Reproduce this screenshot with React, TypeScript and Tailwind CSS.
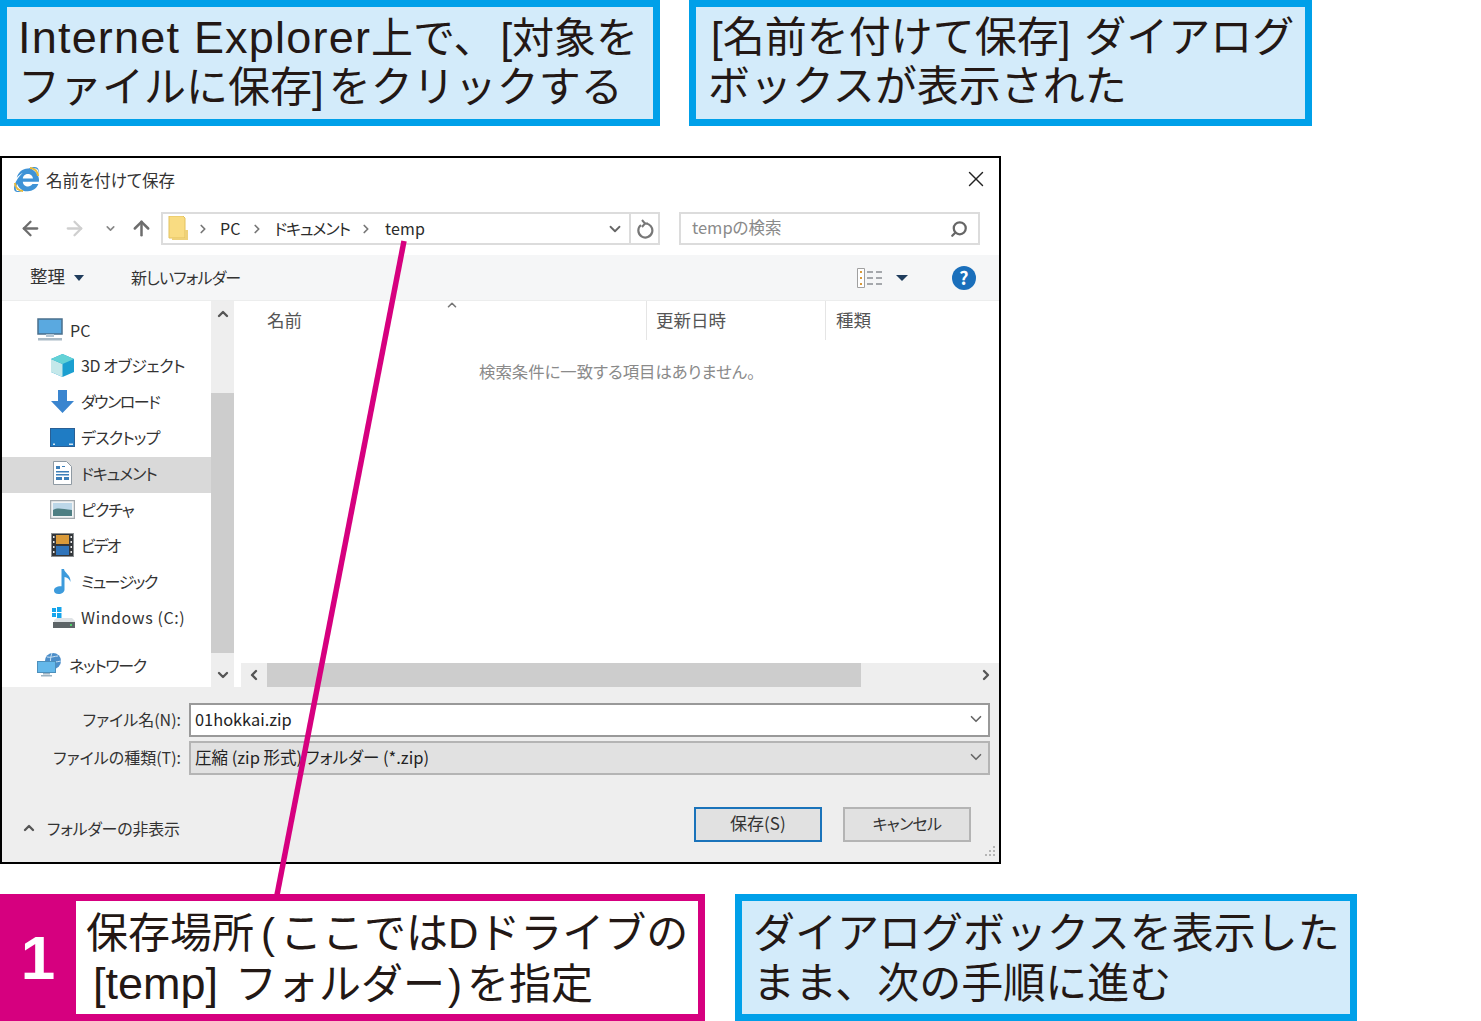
import { ChevronDown, ChevronUp, ChevronLeft, ChevronRight, ArrowLeft, ArrowRight, ArrowUp, Search, X } from "lucide-react"
import { FaInternetExplorer } from "react-icons/fa"
import type { ReactNode } from "react"

function Callout({ className, children }: { className: string; children: ReactNode }) {
  return (
    <div className={`h-full border-[7px] border-[#00a0e9] bg-[#d3ebfa] font-[family-name:'Liberation_Sans','Noto_Sans_CJK_JP',sans-serif] text-[42px] text-[#231815] whitespace-nowrap ${className}`}>
      {children}
    </div>
  )
}

function PcIcon() {
  return (
    <svg width="26" height="24" viewBox="0 0 26 24">
      <rect x="1" y="1" width="24" height="15" fill="#5aa9e0" stroke="#4a6f8c" strokeWidth="1.5" />
      <rect x="9" y="16" width="8" height="3" fill="#b4c6d3" />
      <rect x="1" y="20" width="24" height="2.5" fill="#a9bac6" />
    </svg>
  )
}

function CubeIcon() {
  return (
    <svg width="25" height="25" viewBox="0 0 25 25">
      <path d="M12.5 1 24 6v13l-11.500 5L1 19V6z" fill="#1b9fd0" />
      <path d="M1 6l11.500 5v13L1 19z" fill="#c4e8ea" />
      <path d="M12.500 1 24 6l-11.500 5L1 6z" fill="#63d2d6" />
    </svg>
  )
}

function DownloadIcon() {
  return (
    <svg width="25" height="25" viewBox="0 0 25 25">
      <path d="M8 1h9v11h7L12.500 24 1 12h7z" fill="#3a85cf" />
    </svg>
  )
}

function DesktopIcon() {
  return (
    <svg width="25" height="19" viewBox="0 0 25 19">
      <rect x="0.500" y="0.500" width="24" height="18" fill="#1f7cc4" stroke="#2a5f94" />
      <rect x="3" y="15.500" width="2" height="1.500" fill="#d6e6f2" />
      <rect x="19" y="15.500" width="4" height="1.500" fill="#d6e6f2" />
    </svg>
  )
}

function DocIcon() {
  return (
    <svg width="19" height="24" viewBox="0 0 19 24">
      <path d="M.500.500h13l5 5v18H.500z" fill="#fff" stroke="#8f9aa3" />
      <path d="M3 5h4v3H3zM9 5h3v1H9zM3 10h13v1.500H3zM3 13h13v1.500H3zM3 16h6v3H3zM11 16h5v3h-5z" fill="#3d7fb8" />
    </svg>
  )
}

function PictureIcon() {
  return (
    <svg width="25" height="19" viewBox="0 0 25 19">
      <rect x="0.500" y="0.500" width="24" height="18" fill="#f2f4f5" stroke="#a3a9ad" strokeWidth="1.500" />
      <rect x="3" y="3" width="19" height="13" fill="#bcd7e8" />
      <path d="M3 10c5-3 9-1 19 0v6H3z" fill="#4e7f83" />
    </svg>
  )
}

function VideoIcon() {
  return (
    <svg width="23" height="24" viewBox="0 0 23 24">
      <rect x="0.500" y="0.500" width="22" height="23" fill="#33363a" stroke="#8b8f92" />
      <rect x="5" y="2" width="13" height="9" fill="#d99a3a" />
      <rect x="5" y="13" width="13" height="9" fill="#2f74bb" />
      <path d="M2 3h1.500v2H2zM2 8h1.500v2H2zM2 13h1.500v2H2zM2 18h1.500v2H2zM19.500 3H21v2h-1.500zM19.500 8H21v2h-1.500zM19.500 13H21v2h-1.500zM19.500 18H21v2h-1.500z" fill="#e8e8e8" />
    </svg>
  )
}

function MusicIcon() {
  return (
    <svg width="19" height="25" viewBox="0 0 19 25">
      <path d="M8.500 0h2.500c.5 4 7 6 6.500 13-1-3-3.500-4.500-6-5v12.500c0 2.500-2.500 4.500-6 4.500C2.500 25 1 23.500 1 21.500 1 19 4 17 8.500 17.300z" fill="#3d9bdc" />
    </svg>
  )
}

function DriveIcon() {
  return (
    <svg width="24" height="21" viewBox="0 0 24 21">
      <path d="M1 1h4v4H1zM6 0h4.500v5H6zM1 6h4v4H1zM6 6h4.500v5H6z" fill="#16a5ec" />
      <path d="M3 13 6 11h15l3 3v2H3z" fill="#dfe3e6" />
      <rect x="2" y="15" width="22" height="6" fill="#5d6467" />
      <rect x="19" y="17" width="2" height="2" fill="#4fd06a" />
    </svg>
  )
}

function NetworkIcon() {
  return (
    <svg width="25" height="24" viewBox="0 0 25 24">
      <circle cx="16" cy="8" r="8" fill="#4c8ec9" />
      <path d="M10 4c4 1 8-1 11-1M9 9c5 1 10 0 15-1M15 0c-2 5-2 11 0 16" stroke="#c9e2f4" fill="none" />
      <rect x="0.500" y="8.500" width="18" height="11" fill="#64b8ea" stroke="#4d8fbb" />
      <rect x="6" y="20" width="7" height="1.500" fill="#9bb2c2" />
      <rect x="4" y="22" width="11" height="1.500" fill="#9bb2c2" />
    </svg>
  )
}

const treeItems = [
  { label: "3D オブジェクト", icon: <CubeIcon />, text: "tracking-[-0.4px]" },
  { label: "ダウンロード", icon: <DownloadIcon />, text: "tracking-[-1.5px]" },
  { label: "デスクトップ", icon: <DesktopIcon />, text: "tracking-[-0.8px]" },
  { label: "ドキュメント", icon: <DocIcon />, text: "tracking-[-1px]", active: true },
  { label: "ピクチャ", icon: <PictureIcon />, text: "tracking-[-1px]" },
  { label: "ビデオ", icon: <VideoIcon />, text: "tracking-[-2px]" },
  { label: "ミュージック", icon: <MusicIcon />, text: "tracking-[-1.5px]" },
  { label: "Windows (C:)", icon: <DriveIcon />, text: "tracking-[0.6px]" },
]

function SaveDialog() {
  return (
    <div className="mt-[30px] flex h-[708px] w-[1001px] flex-col border-2 border-black bg-white font-[family-name:'Noto_Sans_CJK_JP','Noto_Sans',sans-serif] text-[16px] text-[#333] [font-feature-settings:'palt']">
      {/* title bar */}
      <div className="flex h-[49px] items-center pb-[6px] pl-3 pr-[10px]">
        <span className="relative flex h-[25px] w-[25px] items-center justify-center">
          <FaInternetExplorer size={25} className="text-[#3f93d6]" />
          <span className="absolute right-0 top-0 h-[9px] w-[9px] rounded-tr-full border-r-2 border-t-2 border-[#e8b93a]" />
          <span className="absolute bottom-0 left-0 h-[9px] w-[9px] rounded-bl-full border-b-2 border-l-2 border-[#e8b93a]" />
        </span>
        <span className="ml-[7px] mt-[2px] text-[16.5px]">名前を付けて保存</span>
        <X size={26} strokeWidth={1.3} className="mb-[2px] ml-auto text-[#222]" />
      </div>

      {/* nav row */}
      <div className="flex h-[48px] items-start pt-[5px]">
        <div className="flex w-[159px] items-center pl-[17px] pt-[5px]">
          <ArrowLeft size={23} className="text-[#6d6d6d]" strokeWidth={2.4} />
          <ArrowRight size={23} className="ml-[21px] text-[#cfcfcf]" strokeWidth={2.4} />
          <ChevronDown size={13} className="ml-[18px] text-[#888]" strokeWidth={3} />
          <ArrowUp size={23} className="ml-[13px] text-[#6d6d6d]" strokeWidth={2.6} />
        </div>
        <div className="flex h-[33px] w-[499px] items-center border-2 border-[#dcdcdc] pb-[2px] text-[#2b2b2b]">
          <svg width="22" height="26" viewBox="0 0 22 26" className="ml-[5px] mt-[2px]">
            <path d="M1 0h14l2 2v20H1z" fill="#f9dc82" stroke="#e3c25e" />
            <path d="M17 14h3v10H4v-2h13z" fill="#eed17a" />
          </svg>
          <ChevronRight size={14} className="ml-[6px] mt-[2px] text-[#777]" strokeWidth={3} />
          <span className="ml-[10px]">PC</span>
          <ChevronRight size={14} className="ml-[10px] mt-[2px] text-[#777]" strokeWidth={3} />
          <span className="ml-[10px] tracking-[-1px]">ドキュメント</span>
          <ChevronRight size={14} className="ml-[9px] mt-[2px] text-[#777]" strokeWidth={3} />
          <span className="ml-[12px] tracking-[0.2px]">temp</span>
          <ChevronDown size={18} className="ml-auto mr-[5px] mt-[2px] text-[#666]" strokeWidth={2.4} />
          <span className="mb-[-2px] flex h-[29px] w-[29px] items-center justify-center border-l-2 border-[#dcdcdc]">
            <svg width="18" height="20" viewBox="0 0 18 20" fill="none" stroke="#777" strokeWidth="2.2">
              <path d="M5 6a7 7 0 1 0 4-1.500h3" />
              <path d="M6 1l3 3.500L6 8" strokeWidth="2" />
            </svg>
          </span>
        </div>
        <div className="ml-[19px] flex h-[33px] w-[301px] items-center justify-between border-2 border-[#dcdcdc] pb-[2px] pl-[11px] pr-[10px] text-[16.500px] text-[#8a8a8a]">
          <span>tempの検索</span>
          <Search size={18} className="mt-[2px] -scale-x-100 text-[#666]" strokeWidth={3} />
        </div>
      </div>

      {/* toolbar */}
      <div className="flex h-[46px] shrink-0 items-center border-b border-[#eceded] bg-[#f5f6f7] pl-[28px] text-[#333]">
        <span className="mb-[2px] text-[17.500px]">整理</span>
        <span className="ml-[9px] h-0 w-0 border-x-[5px] border-t-[6px] border-x-transparent border-t-[#1f3c5c]" />
        <span className="mb-[2px] ml-[47px] tracking-[-0.8px]">新しいフォルダー</span>
        <svg width="26" height="20" viewBox="0 0 26 20" className="ml-auto">
          <path d="M.500.500h7v19h-7z" fill="#fff" stroke="#a0a0a0" />
          <path d="M3 3h2v2H3zM3 9h2v2H3zM3 15h2v2H3z" fill="#d99a3a" />
          <path d="M10 4h6M19 4h6M10 10h6M19 10h6M10 16h6M19 16h6" stroke="#8a8f94" strokeWidth="1.500" />
        </svg>
        <span className="ml-[13px] h-0 w-0 border-x-[6px] border-t-[6px] border-x-transparent border-t-[#1f3c5c]" />
        <span className="ml-[44px] mr-[23px] flex h-[24px] w-[24px] items-center justify-center rounded-full bg-[#1a6fbb] text-[18px] font-bold text-white">?</span>
      </div>

      {/* main */}
      <div className="flex min-h-0 flex-1">
        <div className="w-[209px] shrink-0 pt-[12px]">
          <div className="flex h-[36px] items-center pb-[2px] pl-[35px]">
            <PcIcon />
            <span className="ml-[7px]">PC</span>
          </div>
          {treeItems.map((item) => (
            <div
              key={item.label}
              className={`flex h-[36px] items-center pb-[4px] ${item.active ? "bg-[#d9d9d9]" : ""}`}
            >
              <span className="ml-[48px] flex w-[25px] justify-center">{item.icon}</span>
              <span className={`ml-[6px] whitespace-nowrap ${item.text}`}>{item.label}</span>
            </div>
          ))}
          <div className="mt-[11px] flex h-[36px] items-center pb-[2px] pl-[35px]">
            <NetworkIcon />
            <span className="ml-[7px] tracking-[-1.3px]">ネットワーク</span>
          </div>
        </div>
        <div className="flex w-[23px] shrink-0 flex-col items-center bg-[#eeeeee] pt-[5px]">
          <ChevronUp size={16} className="text-[#555]" strokeWidth={3.5} />
          <div className="mt-[71px] h-[260px] w-full bg-[#cdcdcd]" />
          <ChevronDown size={16} className="mt-[14px] text-[#555]" strokeWidth={3.5} />
        </div>
        <div className="ml-[7px] flex min-w-0 flex-1 flex-col">
          <div className="flex h-[39px] shrink-0 text-[17.500px] text-[#555]">
            <div className="relative w-[405px] pl-[26px] pt-[6px]">
              名前
              <ChevronUp size={14} className="absolute left-[204px] top-[-3px] text-[#777]" strokeWidth={2.8} />
            </div>
            <div className="w-[179px] border-l border-[#e5e5e5] pl-[9px] pt-[6px]">更新日時</div>
            <div className="flex-1 border-l border-[#e5e5e5] pl-[10px] pt-[6px]">種類</div>
          </div>
          <div className="flex-1 pl-[238px] pt-[19px] text-[16.400px] text-[#8a8a8a]">検索条件に一致する項目はありません。</div>
          <div className="flex h-[24px] shrink-0 items-center justify-between bg-[#eeeeee] px-[5px]">
            <ChevronLeft size={16} className="text-[#555]" strokeWidth={3.5} />
            <div className="ml-[5px] mr-auto h-full w-[594px] bg-[#cdcdcd]" />
            <ChevronRight size={16} className="text-[#555]" strokeWidth={3.5} />
          </div>
        </div>
      </div>

      {/* footer */}
      <div className="relative flex h-[175px] shrink-0 flex-col bg-[#eeeeee]">
        <div className="mt-[16px] flex h-[34px] items-center">
          <span className="w-[179px] pb-[2px] text-right">ファイル名(N):</span>
          <div className="ml-[8px] flex h-full w-[801px] items-center justify-between border-2 border-[#999] bg-white pb-[2px] pl-[4px] pr-[3px] text-[16.400px] text-[#222]">
            <span>01hokkai.zip</span>
            <ChevronDown size={18} className="text-[#666]" strokeWidth={2.2} />
          </div>
        </div>
        <div className="mt-[4px] flex h-[34px] items-center">
          <span className="w-[179px] pb-[2px] text-right">ファイルの種類(T):</span>
          <div className="ml-[8px] flex h-full w-[801px] items-center justify-between border-2 border-[#b4b4b4] bg-[#e1e1e1] pb-[2px] pl-[4px] pr-[3px] text-[16.500px] text-[#222]">
            <span>圧縮 (zip 形式) フォルダー (*.zip)</span>
            <ChevronDown size={18} className="text-[#666]" strokeWidth={2.2} />
          </div>
        </div>
        <div className="mt-[32px] flex h-[35px] items-center">
          <ChevronUp size={16} className="ml-[19px] mt-[7px] text-[#555]" strokeWidth={3.5} />
          <span className="ml-[10px] mt-[6px] tracking-[-0.2px]">フォルダーの非表示</span>
          <button className="ml-[514px] h-[35px] w-[128px] border-2 border-[#1a73ba] bg-[#e1e1e1] pb-[3px] text-[17px]">保存(S)</button>
          <button className="ml-[21px] h-[35px] w-[128px] border-2 border-[#b4b4b4] bg-[#e1e1e1] pb-[3px] tracking-[-0.8px]">キャンセル</button>
        </div>
        <svg width="12" height="12" viewBox="0 0 12 12" className="absolute bottom-[4px] right-[3px]">
          <path d="M9 0h2v2H9zM5 4h2v2H5zM9 4h2v2H9zM1 8h2v2H1zM5 8h2v2H5zM9 8h2v2H9z" fill="#b5b5b5" />
        </svg>
      </div>
    </div>
  )
}

export default function App() {
  return (
    <div className="relative h-[1021px] w-[1481px] overflow-hidden bg-white font-[family-name:'Noto_Sans_CJK_JP',sans-serif]">
      <div className="flex h-[126px] gap-[29px]">
        <Callout className="w-[660px] pl-[11px] pt-[6px] leading-[49px]">
          <span className="text-[45px] tracking-[1.2px]">Internet Explorer</span>上で、<span className="ml-[5px]">[</span>対象を
          <br />
          ファイルに保存<span className="mr-[5px]">]</span>をクリックする
        </Callout>
        <Callout className="w-[623px] pl-[15px] pt-[6px] leading-[49px]">
          [名前を付けて保存<span className="mr-[14px]">]</span>ダイアログ
          <br />
          <span className="-ml-[3px]">ボックスが表示された</span>
        </Callout>
      </div>

      <SaveDialog />

      <div className="mt-[30px] flex h-[127px]">
        <div className="flex h-full w-[705px] bg-[#d6007f]">
          <div className="flex w-[76px] shrink-0 items-center justify-center font-[family-name:'Liberation_Sans',sans-serif] text-[62px] font-bold text-white">1</div>
          <div className="my-[7px] mr-[7px] flex-1 whitespace-nowrap bg-white pl-[10px] pt-[8px] font-[family-name:'Liberation_Sans','Noto_Sans_CJK_JP',sans-serif] text-[42px] leading-[50px] text-[#231815]">
            保存場所<span className="ml-[7px] mr-[5px]">(</span>ここではDドライブの
            <br />
            <span className="ml-[7px] mr-[17px] text-[45px]">[temp]</span>フォルダー<span className="ml-[3px] mr-[5px]">)</span>を指定
          </div>
        </div>
        <Callout className="ml-[30px] w-[622px] pl-[11px] pt-[8px] leading-[50px]">
          ダイアログボックスを表示した
          <br />
          まま、次の手順に進む
        </Callout>
      </div>

      {/* leader line from the address bar down to callout 1 */}
      <svg width="1481" height="1021" viewBox="0 0 1481 1021" className="pointer-events-none absolute left-0 top-0">
        <line x1="404" y1="241" x2="277" y2="895" stroke="#d6007f" strokeWidth="5.500" />
      </svg>
    </div>
  )
}
